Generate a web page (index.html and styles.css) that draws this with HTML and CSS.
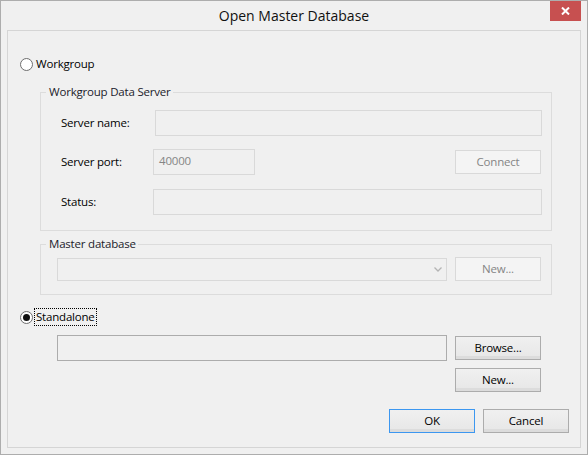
FILE: index.html
```html
<!DOCTYPE html>
<html>
<head>
<meta charset="utf-8">
<link rel="stylesheet" href="styles.css">
</head>
<body>
<div class="window">
  <div class="titlebar">
    <span class="title">Open Master Database</span>
    <div class="close"><svg width="9" height="8" viewBox="0 0 9 8"><path d="M1 0.5 L8 7.5 M8 0.5 L1 7.5" stroke="#fff" stroke-width="2" fill="none"/></svg></div>
  </div>
  <div class="client">
    <div class="radio-row"><span class="radio"></span><span class="radio-text">Workgroup</span></div>
    <fieldset class="group g1">
      <legend>Workgroup Data Server</legend>
      <div class="row">
        <span class="lbl">Server name:</span>
        <div class="field f-name"></div>
      </div>
      <div class="row r2">
        <span class="lbl">Server port:</span>
        <div class="field f-port">40000</div>
        <span class="spacer"></span>
        <div class="btn disabled">Connect</div>
      </div>
      <div class="row r3">
        <span class="lbl">Status:</span>
        <div class="field f-status"></div>
      </div>
    </fieldset>
    <fieldset class="group g2">
      <legend>Master database</legend>
      <div class="row">
        <div class="combo"><svg width="8" height="5" viewBox="0 0 8 5"><path d="M0.5 0.5 L4 4 L7.5 0.5" stroke="#b4b4b4" stroke-width="1.3" fill="none"/></svg></div>
        <div class="btn disabled">New...</div>
      </div>
    </fieldset>
    <div class="radio-row standalone"><span class="radio checked"></span><span class="radio-text focus">Standalone</span></div>
    <div class="path-row">
      <div class="field f-path"></div>
      <div class="btn">Browse...</div>
    </div>
    <div class="new-row">
      <div class="btn">New...</div>
    </div>
    <div class="footer">
      <div class="btn default">OK</div>
      <div class="btn">Cancel</div>
    </div>
  </div>
</div>
</body>
</html>
```
FILE: styles.css
```css
* { box-sizing: border-box; }
html, body { margin: 0; padding: 0; }
body {
  background: #f0f0f0;
  font-family: "Open Sans", "Noto Sans", sans-serif;
  font-size: 11.5px;
  letter-spacing: -0.2px;
  color: #000;
}
.window {
  width: 588px;
  height: 455px;
  border: 1px solid #adadad;
  background: #f0f0f0;
  display: flex;
  flex-direction: column;
}
.titlebar {
  height: 29px;
  flex: none;
  display: grid;
  grid-template-columns: 1fr auto 1fr;
  align-items: center;
}
.title {
  grid-column: 2;
  font-size: 14px;
  letter-spacing: 0;
  line-height: 29px;
  color: #111;
}
.close {
  grid-column: 3;
  justify-self: end;
  align-self: start;
  width: 31px;
  height: 20px;
  margin-right: 6px;
  background: #c75050;
  display: flex;
  align-items: center;
  justify-content: center;
}
.client {
  margin: 0 6px;
  height: 418px;
  flex: none;
  border: 1px solid #d5d5d5;
  padding-top: 25px;
}
.radio-row {
  display: flex;
  align-items: center;
  height: 16px;
  padding-left: 12px;
}
.radio {
  width: 13px;
  height: 13px;
  flex: none;
  border-radius: 50%;
  border: 1px solid #6e6e6e;
  background: #fff;
  margin-right: 3px;
  display: flex;
  align-items: center;
  justify-content: center;
}
.radio.checked::after {
  content: "";
  width: 7px;
  height: 7px;
  border-radius: 50%;
  background: #111;
}
.radio-text { line-height: 16px; }
.focus {
  outline: 1px dotted #000;
  margin-left: -1px;
  padding: 0 1px;
}
.group {
  margin: 12px 28px 0 32px;
  border: 1px solid #dcdcdc;
  padding: 10px 9px 15px 20px;
  min-width: 0;
}
.group legend {
  padding: 0 2px 0 3px;
  margin-left: -15px;
  line-height: 16px;
  color: #1b1b2b;
}
.g2 {
  margin-top: 5px;
  padding: 5px 9px 13px 16px;
}
.g2 legend { margin-left: -11px; }
.row {
  display: flex;
  align-items: center;
}
.r2 { margin-top: 13px; }
.r3 { margin-top: 14px; }
.lbl { width: 92px; flex: none; padding-bottom: 2px; }
.field {
  height: 26px;
  border: 1px solid #d9d9d9;
  background: #f0f0f0;
}
.f-name { flex: 1; margin-left: 2px; }
.f-status { flex: 1; }
.f-port {
  width: 102px;
  flex: none;
  color: #858585;
  padding-left: 5px;
  line-height: 22px;
}
.spacer { flex: 1; }
.btn {
  width: 86px;
  height: 24px;
  flex: none;
  display: flex;
  align-items: center;
  justify-content: center;
  border: 1px solid #acacac;
  background: linear-gradient(#f0f0f0, #e8e8e8 85%, #dcdcdc 85%);
  color: #000;
  padding-bottom: 1px;
}
.btn.disabled {
  border-color: #d9d9d9;
  background: #f4f4f4;
  color: #858585;
}
.row .btn { margin-right: 1px; }
.btn.default { border-color: #3c97f0; }
.combo {
  flex: 1;
  height: 23px;
  margin-right: 8px;
  border: 1px solid #d9d9d9;
  display: flex;
  justify-content: flex-end;
  align-items: center;
  padding-right: 4px;
}
.standalone { margin-top: 14px; }
.path-row {
  display: flex;
  align-items: center;
  gap: 8px;
  margin-top: 10px;
  padding: 0 39px 0 49px;
}
.f-path {
  flex: 1;
  border-color: #acacac;
}
.new-row {
  display: flex;
  justify-content: flex-end;
  margin-top: 7px;
  padding-right: 39px;
}
.footer {
  display: flex;
  justify-content: flex-end;
  gap: 8px;
  margin-top: 17px;
  padding-right: 11px;
}
```
